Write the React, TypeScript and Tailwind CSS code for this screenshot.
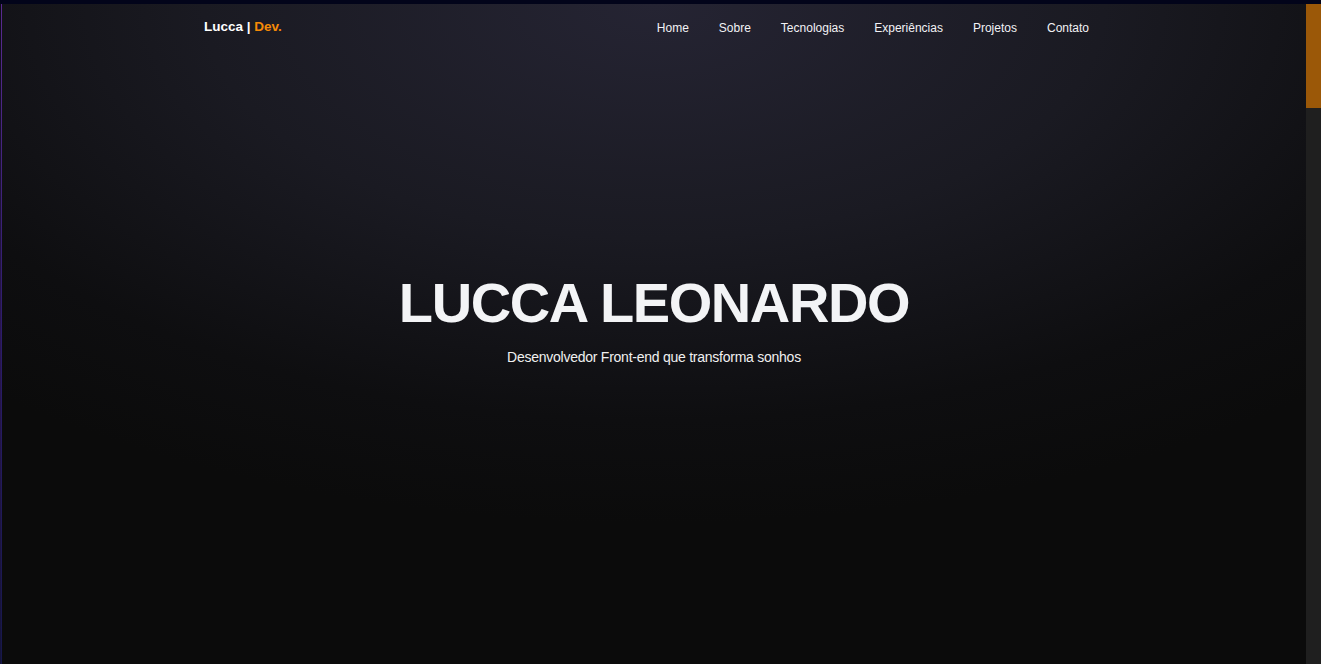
const links = ["Home", "Sobre", "Tecnologias", "Experiências", "Projetos", "Contato"];

export default function App() {
  return (
    <div className="h-[664px] w-full overflow-hidden flex flex-col bg-[#0b0b0b] font-['Liberation_Sans',Arial,sans-serif]">
      {/* top strip */}
      <div className="h-[4px] shrink-0 bg-[#02041a]" />

      <div className="flex flex-1 min-h-0">
        {/* left accent line */}
        <div className="w-[2px] shrink-0 bg-gradient-to-b from-[#0c0c14] via-[#2a1650] to-[#141438]">
          <div className="ml-[1px] h-full w-[1px] bg-gradient-to-b from-[#5a2a90] via-[#2c1c6a] to-[#17174a]" />
        </div>

        <main className="flex-1 min-w-0 bg-[radial-gradient(ellipse_1000px_520px_at_50%_0%,#252433_0%,#1a1a22_45%,#0e0e10_80%,#0b0b0b_100%)]">
          {/* Navbar */}
          <nav className="h-[47px] flex items-center justify-between pl-[202px] pr-[217px]">
            <a className="text-[13.5px] font-bold text-white">
              Lucca <span className="text-white">|</span>{" "}
              <span className="text-[#f58a07]">Dev.</span>
            </a>
            <ul className="flex items-center gap-[30px]">
              {links.map((l) => (
                <li key={l} className="text-[12px] font-medium text-[#f2f2f5]">
                  {l}
                </li>
              ))}
            </ul>
          </nav>

          {/* Hero */}
          <section className="flex flex-col items-center pt-[224px] text-center">
            <h1 className="text-[56px] leading-none font-bold text-[#f3f4f6] tracking-[-1.4px]">
              LUCCA LEONARDO
            </h1>
            <p className="mt-[19px] text-[14px] leading-none text-[#f0f0f0] tracking-[-0.25px]">
              Desenvolvedor Front-end que transforma sonhos
            </p>
          </section>
        </main>

        {/* scrollbar */}
        <div className="w-[15px] shrink-0 bg-[#1f1f1f]">
          <div className="h-[104px] bg-[#9b5808]" />
        </div>
      </div>
    </div>
  );
}
